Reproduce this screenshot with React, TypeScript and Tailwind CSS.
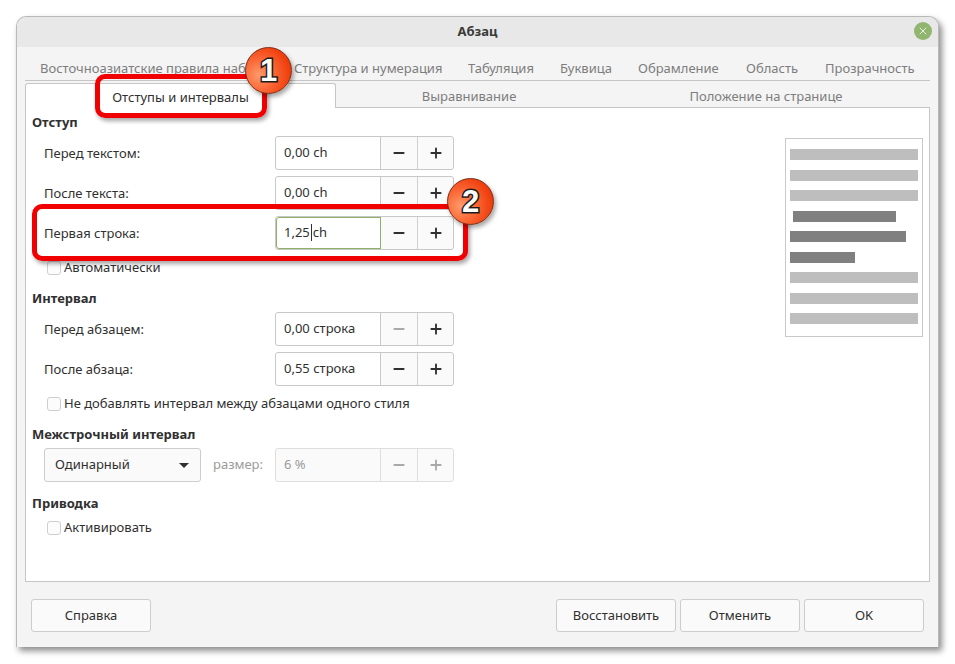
import { Minus, Plus, X } from 'lucide-react'

const topTabs = [
  { label: 'Восточноазиатские правила набора', width: 'w-[254px]' },
  { label: 'Структура и нумерация', width: 'w-[174px]' },
  { label: 'Табуляция', width: 'w-[92px]' },
  { label: 'Буквица', width: 'w-[78px]' },
  { label: 'Обрамление', width: 'w-[108px]' },
  { label: 'Область', width: 'w-[79px]' },
  { label: 'Прозрачность', width: 'w-[116px]' },
]

function Spin({ value, caret, focused, minusOff, disabled }: { value: string; caret?: boolean; focused?: boolean; minusOff?: boolean; disabled?: boolean }) {
  const iconOn = disabled ? 'text-[#a9a9a9]' : 'text-[#303030]'
  return (
    <div className={`flex h-[34px] w-[179px] rounded-[3px] border bg-[#fafafa] ${disabled ? 'border-[#dedede]' : 'border-[#c8c8c8]'}`}>
      <div className={`flex w-[105px] items-center rounded-l-[3px] border-r pl-2 pb-px ${focused ? 'border-r-[#8fb06a] bg-white outline outline-[#8fb06a] -outline-offset-1' : disabled ? 'border-r-[#dedede] bg-[#fafafa]' : 'border-r-[#c8c8c8] bg-white'} ${disabled ? 'text-[#9b9b9b]' : 'text-[#303030]'}`}>
        {caret ? (
          <>
            1,25<span className="mx-px h-[17px] w-px bg-[#303030]" />ch
          </>
        ) : (
          value
        )}
      </div>
      <div className={`flex w-[37px] items-center justify-center border-r ${disabled ? 'border-r-[#dedede]' : 'border-r-[#d0d0d0]'}`}>
        <Minus className={`h-4 w-4 ${minusOff ? 'text-[#a9a9a9]' : iconOn}`} strokeWidth={2.8} absoluteStrokeWidth={false} />
      </div>
      <div className="flex flex-1 items-center justify-center">
        <Plus className={`h-4 w-4 ${iconOn}`} strokeWidth={2.8} />
      </div>
    </div>
  )
}

function Row({ label, children }: { label: string; children: React.ReactNode }) {
  return (
    <div className="flex h-[34px] items-center pl-[18px]">
      <span className="w-[231px] pt-px text-[#303030]">{label}</span>
      {children}
    </div>
  )
}

function Check({ label, className }: { label: string; className: string }) {
  return (
    <div className={`flex items-center pl-[21px] ${className}`}>
      <span className="mr-[3px] h-[14px] w-[14px] rounded-[3px] border border-[#cfcfcf] bg-[#fcfcfc]" />
      <span className="text-[#303030]">{label}</span>
    </div>
  )
}

function Heading({ children, className }: { children: string; className: string }) {
  return <div className={`pl-1.5 font-bold leading-[18px] text-[#303030] ${className}`}>{children}</div>
}

function Btn({ children }: { children: string }) {
  return (
    <button className="flex h-[33px] w-[120px] items-center justify-center rounded-[3px] border border-[#cdcdcd] bg-[#fafafa] pt-px text-[#303030]">
      {children}
    </button>
  )
}

function Marker({ n, className }: { n: string; className: string }) {
  return (
    <div className={`absolute z-20 flex h-[47px] w-[47px] items-center justify-center rounded-full border border-[#7a2a10] bg-[radial-gradient(circle_at_28%_60%,#ff9a6c_0%,#fb6a38_35%,#f0400f_72%,#d92c08_100%)] shadow-[2px_3px_4px_rgba(0,0,0,0.35)] ${className}`}>
      <span className="font-['Liberation_Sans',sans-serif] text-[31px] leading-none font-bold text-white [-webkit-text-stroke:3px_#1c1c1c] [paint-order:stroke_fill]">{n}</span>
    </div>
  )
}

export default function App() {
  return (
    <div className="h-[664px] w-[955px] overflow-hidden bg-white pt-4 pl-4 font-['Noto_Sans',sans-serif] text-[13px]">
      <div className="relative flex h-[631px] w-[923px] flex-col rounded-t-[10px] border border-b-0 border-[#b9b9b9] bg-[#f4f4f4] shadow-[3px_4px_6px_rgba(0,0,0,0.45)]">
        {/* title */}
        <div className="relative flex h-[30px] shrink-0 items-center justify-center rounded-t-[10px] bg-[#e8e8e8] font-bold text-[#3a3a3a]">
          Абзац
          <span className="absolute right-[6px] top-[5px] flex h-[18px] w-[18px] items-center justify-center rounded-full bg-[#8fb56e] text-white">
            <X className="h-3 w-3" strokeWidth={1.6} />
          </span>
        </div>

        {/* tab rows */}
        <div className="mx-2 mt-3 flex h-[22px] shrink-0 items-start border-b border-[#c6c6c6] pl-[15px] text-[#7d7d7d]">
          {topTabs.map((t) => (
            <span key={t.label} className={`shrink-0 overflow-hidden whitespace-nowrap ${t.width}`}>
              {t.label}
            </span>
          ))}
        </div>
        <div className="mx-2 mt-0.5 flex h-6 shrink-0 text-[#7d7d7d]">
          <div className="relative z-10 flex h-[25px] w-[311px] items-center justify-center rounded-t-[3px] border border-b-0 border-[#c6c6c6] bg-white pt-1 text-[#303030]">
            Отступы и интервалы
          </div>
          <div className="flex w-[266px] items-center justify-center pt-1">Выравнивание</div>
          <div className="flex flex-1 items-center justify-center pt-1">Положение на странице</div>
        </div>

        {/* page */}
        <div className="mx-2 flex h-[475px] shrink-0 justify-between border border-[#c6c6c6] bg-white">
          <div className="w-[460px] pt-[5px]">
            <Heading className="mb-[5px]">Отступ</Heading>
            <div className="flex flex-col gap-1.5">
              <Row label="Перед текстом:"><Spin value="0,00 ch" /></Row>
              <Row label="После текста:"><Spin value="0,00 ch" /></Row>
              <Row label="Первая строка:"><Spin value="1,25 ch" caret focused /></Row>
            </div>
            <Check label="Автоматически" className="mt-[10px] h-[16px]" />
            <Heading className="mt-[13px] mb-[5px]">Интервал</Heading>
            <div className="flex flex-col gap-1.5">
              <Row label="Перед абзацем:"><Spin value="0,00 строка" minusOff /></Row>
              <Row label="После абзаца:"><Spin value="0,55 строка" /></Row>
            </div>
            <Check label="Не добавлять интервал между абзацами одного стиля" className="mt-[10px] h-[16px]" />
            <Heading className="mt-[13px] mb-[5px]">Межстрочный интервал</Heading>
            <div className="flex h-[34px] items-center pl-[18px]">
              <div className="flex h-[34px] w-[157px] items-center justify-between rounded-[3px] border border-[#cdcdcd] bg-[#fafafa] pr-[11px] pl-[10px] text-[#303030]">
                Одинарный
                <span className="h-0 w-0 border-x-[5px] border-t-[5px] border-x-transparent border-t-[#303030]" />
              </div>
              <span className="ml-3 w-[62px] text-[#9b9b9b]">размер:</span>
              <Spin value="6 %" disabled />
            </div>
            <Heading className="mt-[12px] mb-[8px]">Приводка</Heading>
            <Check label="Активировать" className="h-[16px]" />
          </div>

          {/* preview */}
          <div className="mt-[30px] mr-[6px] flex h-[199px] w-[138px] flex-col gap-[9.5px] border border-[#c9c9c9] px-1 pt-[10px]">
            <div className="h-[11px] shrink-0 bg-[#bebebe]" />
            <div className="h-[11px] shrink-0 bg-[#bebebe]" />
            <div className="h-[11px] shrink-0 bg-[#bebebe]" />
            <div className="ml-[3px] h-[11px] w-[103px] shrink-0 bg-[#808080]" />
            <div className="h-[11px] w-[116px] shrink-0 bg-[#808080]" />
            <div className="h-[11px] w-[65px] shrink-0 bg-[#808080]" />
            <div className="h-[11px] shrink-0 bg-[#bebebe]" />
            <div className="h-[11px] shrink-0 bg-[#bebebe]" />
            <div className="h-[11px] shrink-0 bg-[#bebebe]" />
          </div>
        </div>

        {/* footer */}
        <div className="mt-[17px] flex justify-between px-[14px]">
          <Btn>Справка</Btn>
          <div className="flex gap-1">
            <Btn>Восстановить</Btn>
            <Btn>Отменить</Btn>
            <Btn>OK</Btn>
          </div>
        </div>

        {/* annotations */}
        <div className="absolute top-[57px] left-[78px] z-20 h-[44px] w-[172px] rounded-[10px] border-[5px] border-[#f00000] shadow-[2px_3px_4px_rgba(0,0,0,0.35)]" />
        <div className="absolute top-[187px] left-[15px] z-20 h-[57px] w-[436px] rounded-[10px] border-[5px] border-[#f00000] shadow-[2px_3px_4px_rgba(0,0,0,0.35)]" />
        <Marker n="1" className="top-[30px] left-[228px]" />
        <Marker n="2" className="top-[161px] left-[430px]" />
      </div>
    </div>
  )
}
